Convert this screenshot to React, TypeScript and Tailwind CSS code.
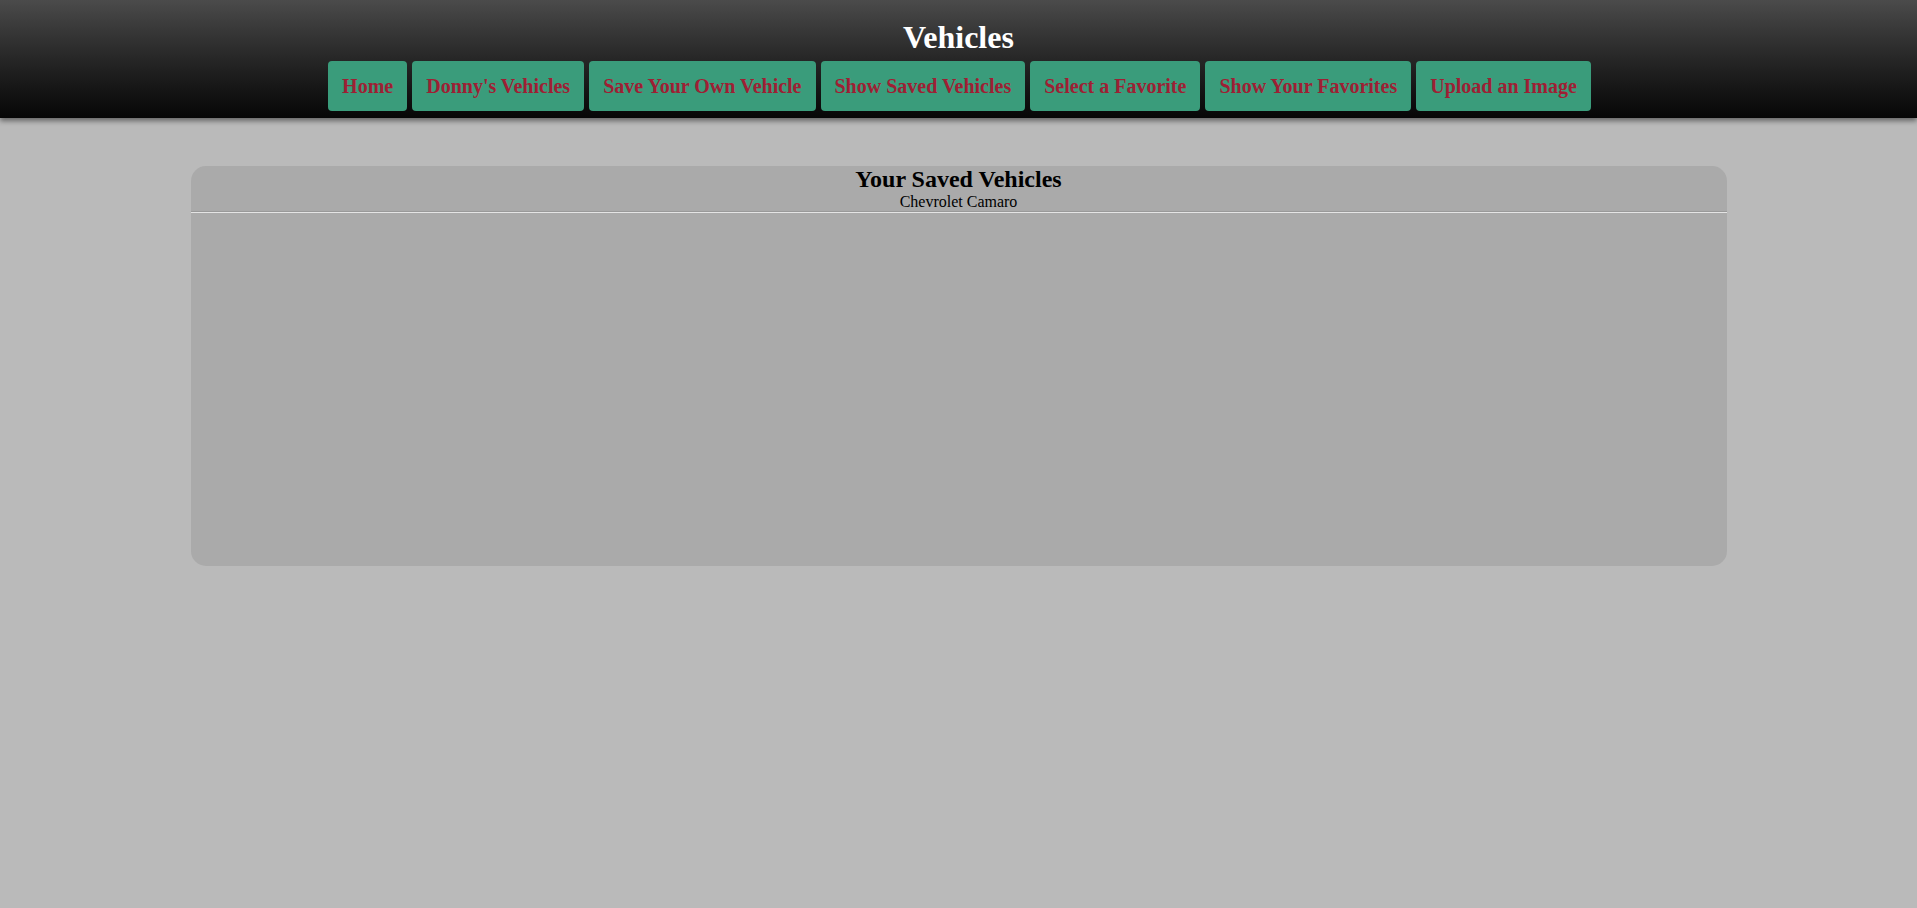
const links = [
  'Home',
  "Donny's Vehicles",
  'Save Your Own Vehicle',
  'Show Saved Vehicles',
  'Select a Favorite',
  'Show Your Favorites',
  'Upload an Image',
];

export default function App() {
  return (
    <div
      className="min-h-screen bg-[#bababa] text-black"
      style={{ fontFamily: '"Liberation Serif", "Times New Roman", serif' }}
    >
      {/* Header */}
      <header className="relative z-10 bg-gradient-to-b from-[#4b4b4b] to-[#070707] pt-[20px] pb-[7px] shadow-[0_3px_5px_rgba(0,0,0,0.45)]">
        <h1 className="text-center text-[32px] font-bold leading-[35px] text-white">
          Vehicles
        </h1>
        <nav className="mt-[6px] flex justify-center gap-[5px] pl-[2px]">
          {links.map((label) => (
            <a
              key={label}
              href="#"
              className="flex h-[50px] items-center rounded-[4px] bg-[#3a9c7b] px-[14px] text-[20px] font-bold text-[#9e1f34]"
            >
              {label}
            </a>
          ))}
        </nav>
      </header>

      {/* Saved vehicles card */}
      <main className="pt-[48px]">
        <section className="mx-auto h-[400px] w-[1536px] overflow-hidden rounded-[15px] bg-[#aaaaaa]">
          <h2 className="text-center text-[24px] font-bold leading-[26px]">
            Your Saved Vehicles
          </h2>
          <p className="text-center text-[16px] leading-[19px]">Chevrolet Camaro</p>
          <div className="border-t border-b border-t-[#999999] border-b-[#e4e4e4]" />
        </section>
      </main>
    </div>
  );
}
